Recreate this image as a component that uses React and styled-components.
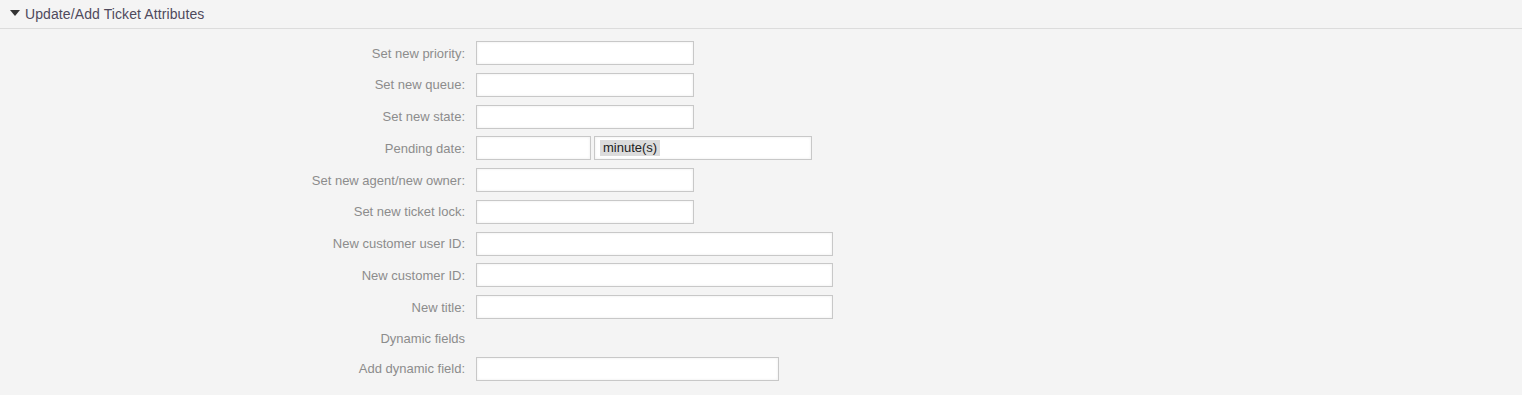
import styled, { createGlobalStyle } from "styled-components";

const GlobalStyle = createGlobalStyle`
	html, body {
		margin: 0;
		padding: 0;
		background: #f4f4f4;
		font-family: "Liberation Sans", Arial, sans-serif;
	}
`;

const rows = [
	{ label: "Set new priority:", width: 218 },
	{ label: "Set new queue:", width: 218 },
	{ label: "Set new state:", width: 218 },
	{ label: "Pending date:", pending: true },
	{ label: "Set new agent/new owner:", width: 218 },
	{ label: "Set new ticket lock:", width: 218 },
	{ label: "New customer user ID:", width: 357 },
	{ label: "New customer ID:", width: 357 },
	{ label: "New title:", width: 357 },
];

const App = () => {
	return (
		<Widget>
			<GlobalStyle />
			<Header>
				<Toggle />
				<h2>Update/Add Ticket Attributes</h2>
			</Header>
			<Form>
				{rows.map((row) => (
					<Row key={row.label}>
						<Label>{row.label}</Label>
						{row.pending ? (
							<Fields>
								<Input $width={115} />
								<Select $width={218}>
									<Tag>minute(s)</Tag>
								</Select>
							</Fields>
						) : (
							<Input $width={row.width} />
						)}
					</Row>
				))}
				<Row $short>
					<Label>Dynamic fields</Label>
					<span />
				</Row>
				<Row>
					<Label>Add dynamic field:</Label>
					<Input $width={303} />
				</Row>
			</Form>
		</Widget>
	);
};

export default App;

const Widget = styled.div`
	width: 100%;
	min-height: 395px;
	background: #f4f4f4;
`;

const Header = styled.div`
	display: flex;
	align-items: center;
	height: 28px;
	padding-left: 10px;
	border-bottom: 1px solid #dcdcdc;

	h2 {
		margin: 0 0 0 5px;
		font-size: 14px;
		font-weight: normal;
		color: #4f4a5c;
		line-height: 28px;
		letter-spacing: 0.1px;
	}
`;

const Toggle = styled.span`
	width: 0;
	height: 0;
	border-left: 5.5px solid transparent;
	border-right: 5.5px solid transparent;
	border-top: 6px solid #333;
	margin-top: -2px;
`;

const Form = styled.div`
	display: flex;
	flex-direction: column;
	gap: 7.75px;
	padding-top: 12px;
`;

const Row = styled.div`
	display: grid;
	grid-template-columns: 465px 1fr;
	column-gap: 11px;
	align-items: center;
	height: ${({ $short }) => ($short ? "21px" : "24px")};
	margin-top: ${({ $short }) => ($short ? "1px" : "0")};
`;

const Label = styled.label`
	text-align: right;
	font-size: 13px;
	color: #8c8c8c;
`;

const Fields = styled.div`
	display: flex;
	gap: 3px;
`;

const Input = styled.div`
	box-sizing: border-box;
	width: ${({ $width }) => $width}px;
	height: 24px;
	background: #fff;
	border: 1px solid #c8c8c8;
	box-shadow: inset 0 0 3px rgba(0, 0, 0, 0.08);
`;

const Select = styled(Input)`
	display: flex;
	align-items: center;
	padding-left: 5px;
`;

const Tag = styled.span`
	background: #dcdcdc;
	color: #222;
	font-size: 13px;
	padding: 1px 3px;
	line-height: 14px;
`;
